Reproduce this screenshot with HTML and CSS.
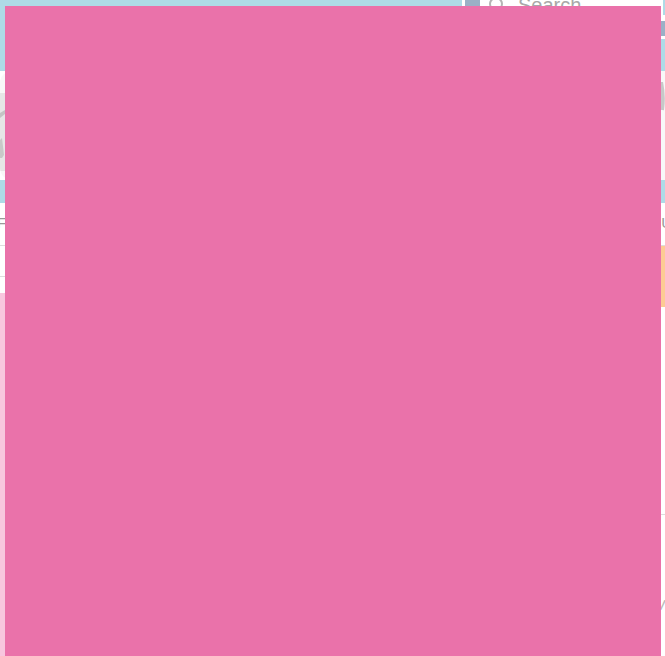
FILE: index.html
```html
<!DOCTYPE html>
<html lang="en">
<head>
  <meta charset="UTF-8" />
  <title>Search</title>
  <link rel="stylesheet" href="styles.css">
</head>
<body>

  <header class="top">
    <div class="top-left"></div>
    <div class="top-gap"></div>
    <div class="top-tab"></div>
    <div class="search">
      <div class="search-box">
        <svg class="search-icon" width="18" height="18" viewBox="0 0 18 18" fill="none" stroke="#b5b5b5" stroke-width="2"><circle cx="8" cy="4" r="6"/><path d="M12 9l4 5"/></svg>
        <span class="search-text">Search</span>
        <span class="search-corner"></span>
      </div>
      <div class="search-strip"></div>
    </div>
  </header>

  <div class="banner">
    <svg class="logo-left" width="5" height="78" viewBox="0 0 5 78"><path d="M0 0h5v78H0z" fill="#e6e6e6"/><path d="M0 20l5-3v4l-5 4z" fill="#c4c4c4"/><path d="M0 65v-18l2-2 2 17-2 3z" fill="#c8c8c8"/></svg>
    <svg class="logo-right" width="5" height="40" viewBox="0 0 5 40" fill="none" stroke="#c8c8c8" stroke-width="4"><path d="M1 0q3 14 1 28"/></svg>
  </div>

  <nav class="nav"></nav>

  <div class="menu">
    <span class="menu-left">F</span>
    <span class="menu-right">U</span>
  </div>

  <div class="main">
    <div class="sub-row"></div>
    <div class="columns">
      <div class="pink-col"></div>
      <aside class="side">
        <div class="orange"></div>
        <div class="side-rule"></div>
        <div class="side-word">w</div>
      </aside>
    </div>
  </div>

  <div class="overlay"></div>

</body>
</html>
```

FILE: styles.css
```css
* {
  box-sizing: border-box;
}
body {
  margin: 0;
  height: 656px;
  overflow: hidden;
  background: #fff;
  font-family: "Liberation Sans", sans-serif;
  position: relative;
}
.top {
  display: flex;
  height: 71px;
  background: #aedbe7;
}
.top-left {
  width: 462px;
}
.top-gap {
  width: 3px;
  background: #fff;
}
.top-tab {
  width: 15px;
  height: 36px;
  background: #9bb0c6;
}
.search {
  flex: 1;
  display: flex;
  flex-direction: column;
  height: 39px;
  background: #fff;
}
.search-box {
  display: flex;
  align-items: flex-start;
  gap: 12px;
  height: 21px;
  padding-left: 8px;
}
.search-icon {
  flex: none;
}
.search-text {
  flex: 1;
  margin-top: -6px;
  font-size: 20px;
  color: #a8a8a8;
}
.search-corner {
  width: 2px;
  height: 15px;
  background: #aedbe7;
}
.search-strip {
  height: 15px;
  background: #9bb0c6;
}
.banner {
  display: flex;
  justify-content: space-between;
  align-items: flex-start;
  height: 109px;
  background: #f8f8f8;
  border-radius: 12px 0 0 12px;
  overflow: hidden;
}
.logo-left {
  margin-top: 22px;
}
.logo-right {
  margin-top: 11px;
}
.nav {
  height: 23px;
  background: #aedbe7;
}
.menu {
  display: flex;
  justify-content: space-between;
  height: 43px;
  padding-top: 11px;
  border-bottom: 1px solid #ddd;
  color: #999;
  font-size: 15px;
}
.menu-left {
  margin-left: -3px;
}
.menu-right {
  margin-right: -7px;
}
.sub-row {
  height: 31px;
  border-bottom: 1px solid #ddd;
}
.columns {
  display: flex;
  justify-content: space-between;
}
.pink-col {
  width: 462px;
  height: 364px;
  margin-top: 16px;
  background: #f8c6de;
}
.side {
  width: 150px;
  margin-top: -31px;
}
.orange {
  height: 61px;
  background: #fdcb94;
}
.side-rule {
  height: 1px;
  margin-top: 207px;
  background: #ddd;
}
.side-word {
  margin-top: 78px;
  text-align: right;
  font-size: 19px;
  font-style: italic;
  color: #bbb;
}
.overlay {
  position: absolute;
  left: 5px;
  top: 6px;
  width: 656px;
  height: 650px;
  background: #ea72aa;
}
```
